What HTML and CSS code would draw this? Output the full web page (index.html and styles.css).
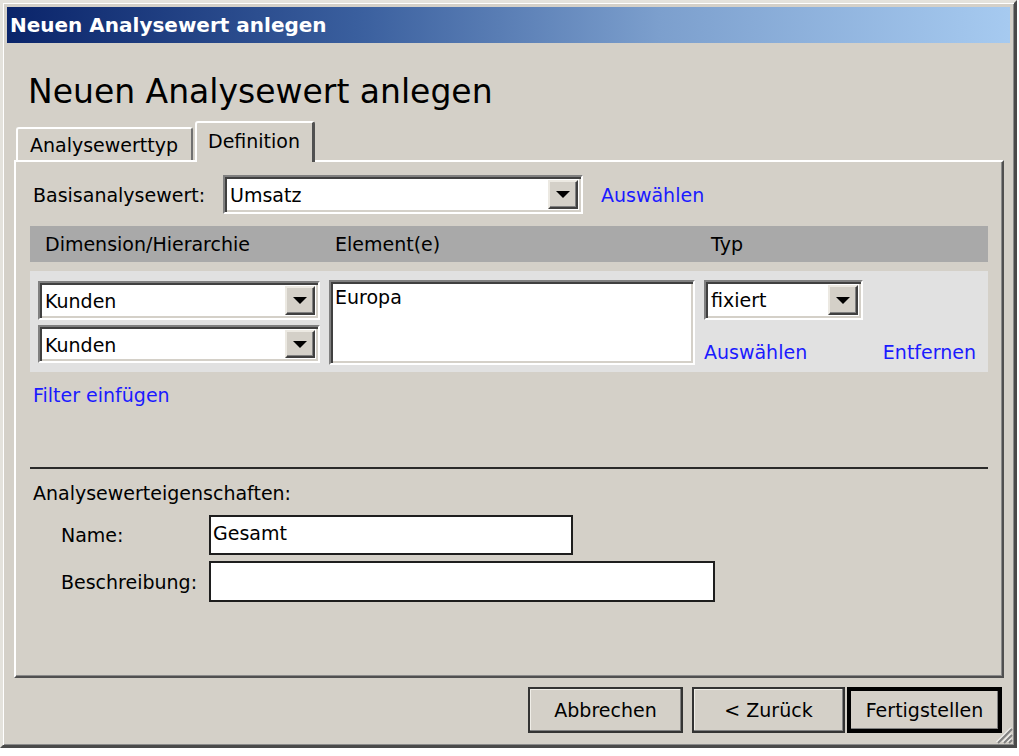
FILE: index.html
```html
<!DOCTYPE html>
<html lang="de">
<head>
<meta charset="utf-8">
<title>Neuen Analysewert anlegen</title>
<link rel="stylesheet" href="styles.css">
</head>
<body>
<div class="window">
  <div class="titlebar">Neuen Analysewert anlegen</div>
  <h1 class="heading">Neuen Analysewert anlegen</h1>
  <div class="tabs">
    <div class="tab">Analysewerttyp</div>
    <div class="tab active">Definition</div>
  </div>
  <div class="panel">
    <div class="base-row">
      <span class="base-label">Basisanalysewert:</span>
      <div class="select w-base"><span class="select-text">Umsatz</span><span class="drop"><span class="tri"></span></span></div>
      <a class="link base-link">Auswählen</a>
    </div>
    <div class="grid-head">
      <div class="hcell">Dimension/Hierarchie</div>
      <div class="hcell">Element(e)</div>
      <div class="hcell">Typ</div>
    </div>
    <div class="grid-row">
      <div class="col1">
        <div class="select w-dim"><span class="select-text">Kunden</span><span class="drop"><span class="tri"></span></span></div>
        <div class="select w-dim h38"><span class="select-text">Kunden</span><span class="drop"><span class="tri"></span></span></div>
      </div>
      <div class="col2">
        <div class="textarea">Europa</div>
      </div>
      <div class="col3">
        <div class="select w-typ"><span class="select-text">fixiert</span><span class="drop"><span class="tri"></span></span></div>
        <div class="row-links">
          <a class="link">Auswählen</a>
          <a class="link">Entfernen</a>
        </div>
      </div>
    </div>
    <a class="link filter">Filter einfügen</a>
    <div class="separator"></div>
    <div class="props-label">Analysewerteigenschaften:</div>
    <div class="field">
      <span class="field-label">Name:</span>
      <div class="input w-name">Gesamt</div>
    </div>
    <div class="field field-2">
      <span class="field-label">Beschreibung:</span>
      <div class="input w-desc"></div>
    </div>
  </div>
  <div class="buttons">
    <div class="btn">Abbrechen</div>
    <div class="btn btn-back">&lt; Zurück</div>
    <div class="btn btn-default">Fertigstellen</div>
  </div>
  <svg class="grip" width="20" height="20" viewBox="0 0 20 20">
    <g stroke="#808080" stroke-width="2">
      <line x1="18" y1="4" x2="4" y2="18"/>
      <line x1="18" y1="10" x2="10" y2="18"/>
      <line x1="18" y1="15" x2="15" y2="18"/>
    </g>
    <g stroke="#ffffff" stroke-width="1">
      <line x1="17" y1="2.5" x2="2.5" y2="17"/>
      <line x1="17" y1="8.5" x2="8.5" y2="17"/>
      <line x1="17" y1="13.5" x2="13.5" y2="17"/>
    </g>
  </svg>
</div>
</body>
</html>
```

FILE: styles.css
```css
* { box-sizing: border-box; }

html, body {
  margin: 0;
  padding: 0;
  background: #ffffff;
}

body {
  font-family: "DejaVu Sans", "Liberation Sans", sans-serif;
  font-size: 19px;
  color: #000;
}

.window {
  position: relative;
  width: 1017px;
  height: 748px;
  background: #d4d0c8;
  border: 3px solid;
  border-color: #e4e2dc #4a4a4a #4a4a4a #e4e2dc;
  box-shadow: inset 1px 1px 0 #ffffff, inset -1px -1px 0 #8a8a8a;
  padding: 4px 4px 0 4px;
  display: flex;
  flex-direction: column;
}

.titlebar {
  height: 36px;
  background: linear-gradient(to right, #0a246a 0%, #3a5f9e 35%, #7c9fcd 65%, #a6caf0 100%);
  color: #fff;
  font-weight: bold;
  font-size: 20px;
  line-height: 36px;
  padding-left: 3px;
  white-space: nowrap;
}

.heading {
  margin: 29px 0 0 21px;
  font-weight: normal;
  font-size: 33px;
  line-height: 40px;
  height: 40px;
}

.tabs {
  margin: 9px 0 0 9px;
  height: 39px;
  display: flex;
  align-items: flex-end;
  position: relative;
  z-index: 2;
}

.tab {
  height: 33px;
  width: 177px;
  border: 2px solid;
  border-bottom: none;
  border-color: #ffffff #707070 transparent #ffffff;
  border-radius: 3px 3px 0 0;
  padding: 4px 0 0 12px;
  font-size: 19px;
  line-height: 24px;
  white-space: nowrap;
}

.tab.active {
  width: 120px;
  height: 41px;
  margin-left: 2px;
  margin-bottom: -2px;
  background: #d4d0c8;
  padding: 6px 0 0 11px;
  border-right: 3px solid #505050;
}

.panel {
  margin: 0 6px 0 7px;
  height: 518px;
  border: 2px solid;
  border-color: #ffffff #505050 #505050 #ffffff;
  box-shadow: inset -1px -1px 0 #8a8a8a;
  padding: 13px 14px 0 14px;
  display: flex;
  flex-direction: column;
  align-items: flex-start;
}

.link {
  color: #1a1aff;
  white-space: nowrap;
  line-height: 22px;
}

.base-row {
  display: flex;
  align-items: center;
  padding-left: 3px;
  height: 39px;
}

.base-label {
  width: 190px;
}

.base-link {
  margin-left: 18px;
}

/* select / inputs */
.select {
  height: 39px;
  background: #fff;
  border: 2px solid;
  border-color: #808080 #ffffff #ffffff #808080;
  box-shadow: inset 2px 2px 0 #404040, inset -2px -2px 0 #d4d0c8;
  display: flex;
  align-items: stretch;
  padding: 3px 3px 3px 4px;
}

.select-text {
  flex: 1;
  line-height: 31px;
  padding-left: 1px;
  white-space: nowrap;
}

.drop {
  width: 30px;
  background: #d4d0c8;
  border: 2px solid;
  border-color: #ece9e2 #404040 #404040 #ece9e2;
  box-shadow: inset -1px -1px 0 #808080;
  display: flex;
  align-items: center;
  justify-content: center;
}

.tri {
  width: 0;
  height: 0;
  border-left: 7px solid transparent;
  border-right: 7px solid transparent;
  border-top: 7px solid #000;
}

.w-base { width: 360px; }
.w-dim { width: 282px; }
.w-typ { width: 159px; height: 40px; }
.h38 { height: 38px; margin-top: 5px; }

.grid-head {
  margin-top: 12px;
  width: 958px;
  height: 36px;
  background: #a9a9a9;
  display: grid;
  grid-template-columns: 290px 376px 1fr;
}

.hcell {
  padding-left: 15px;
  line-height: 36px;
  white-space: nowrap;
}

.grid-row {
  margin-top: 9px;
  width: 958px;
  height: 101px;
  background: #e1e1e1;
  display: grid;
  grid-template-columns: 290px 376px 1fr;
}

.col1 {
  padding: 10px 0 0 8px;
  display: flex;
  flex-direction: column;
}

.col2 {
  padding: 9px 0 0 9px;
}

.textarea {
  width: 366px;
  height: 85px;
  background: #fff;
  border: 2px solid;
  border-color: #808080 #ffffff #ffffff #808080;
  box-shadow: inset 2px 2px 0 #404040, inset -2px -2px 0 #d4d0c8;
  padding: 3px 4px;
  line-height: 24px;
}

.col3 {
  padding: 9px 12px 0 8px;
  display: flex;
  flex-direction: column;
}

.row-links {
  margin-top: 21px;
  display: flex;
  justify-content: space-between;
}

.filter {
  margin: 12px 0 0 3px;
}

.separator {
  margin-top: 61px;
  width: 958px;
  height: 2px;
  background: #2a2a2a;
}

.props-label {
  margin: 13px 0 0 3px;
  line-height: 22px;
}

.field {
  margin-top: 11px;
  display: flex;
  align-items: center;
  padding-left: 31px;
}

.field-2 {
  margin-top: 6px;
}

.field-label {
  width: 148px;
  white-space: nowrap;
}

.input {
  height: 40px;
  background: #fff;
  border: 2px solid #1e1e1e;
  padding: 1px 2px;
  line-height: 30px;
}

.w-name { width: 364px; }
.w-desc { width: 506px; height: 41px; }

.buttons {
  margin-top: 9px;
  display: flex;
  justify-content: flex-end;
  padding-right: 8px;
}

.btn {
  width: 155px;
  height: 46px;
  border: 2px solid #333;
  box-shadow: inset -1px -1px 0 #808080, inset 1px 1px 0 #f0eee8;
  display: flex;
  align-items: center;
  justify-content: center;
  white-space: nowrap;
}

.btn + .btn {
  margin-left: 9px;
}

.btn-back {
  width: 153px;
}

.btn.btn-default {
  margin-left: 2px;
  border: 4px solid #000;
  box-shadow: inset -1px -1px 0 #808080;
}

.grip {
  position: absolute;
  right: 0;
  bottom: 0;
}
```
